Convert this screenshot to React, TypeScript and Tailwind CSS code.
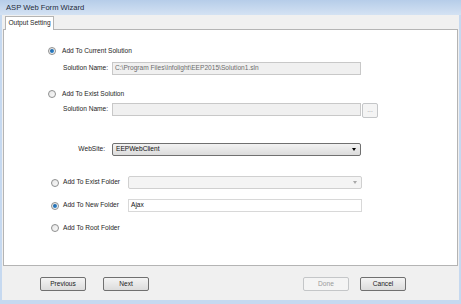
function Radio({ checked }: { checked?: boolean }) {
  return (
    <span className="flex h-[8px] w-[8px] shrink-0 items-center justify-center rounded-full border border-[#8e8f8f] bg-gradient-to-br from-[#e6e6e6] to-[#fafafa]">
      {checked && <span className="h-[4px] w-[4px] rounded-full bg-gradient-to-br from-[#1c5f9c] to-[#2f8ad6]" />}
    </span>
  );
}

function Button({ label, disabled }: { label: string; disabled?: boolean }) {
  return (
    <button
      className={
        disabled
          ? 'h-[14px] w-[46px] rounded-[2px] border border-[#c4c6c8] bg-[#f4f4f4] text-[#9a9a9a]'
          : 'h-[14px] w-[46px] rounded-[2px] border border-[#707070] bg-gradient-to-b from-[#f4f4f4] to-[#dcdcdc] text-[#1a1a1a]'
      }
    >
      {label}
    </button>
  );
}

export default function App() {
  return (
    <div
      className="flex h-[304px] w-[461px] flex-col bg-[#c6d9f0] text-[6.6px] leading-none text-[#1e1e1e]"
      style={{ fontFamily: '"Liberation Sans", Arial, sans-serif' }}
    >
      <div className="flex h-[15px] shrink-0 items-center bg-gradient-to-b from-[#b6cde9] to-[#d4e2f3] pl-[6px] text-[7.6px] text-[#1e2a3a]">
        ASP Web Form Wizard
      </div>

      <div className="mx-[2px] flex flex-1 flex-col bg-[#f0f0f0]">
        <div className="flex h-[14px] shrink-0 items-end pl-[3px]">
          <div className="relative z-10 -mb-px flex h-[14px] w-[49px] items-center justify-center border border-b-0 border-[#b4b4b4] bg-white">
            Output Setting
          </div>
        </div>

        <div className="mx-px flex h-[237px] shrink-0 flex-col border border-[#b4b4b4] bg-white">
          <div className="mt-[14px] flex h-[14px] items-center pl-[44px]">
            <Radio checked />
            <span className="ml-[6px]">Add To Current Solution</span>
          </div>
          <div className="mt-[4px] flex h-[13px] items-center pl-[59px]">
            <span className="w-[49px]">Solution Name:</span>
            <div className="flex h-[13px] w-[249px] items-center border border-[#c8c8c8] bg-[#f0f0f0] pl-[2px] text-[#6d6d6d]">
              C:\Program Files\Infolight\EEP2015\Solution1.sln
            </div>
          </div>

          <div className="mt-[12px] flex h-[14px] items-center pl-[44px]">
            <Radio />
            <span className="ml-[6px]">Add To Exist Solution</span>
          </div>
          <div className="mt-[2px] flex h-[15px] items-start pl-[59px]">
            <span className="flex h-[13px] w-[49px] items-center">Solution Name:</span>
            <div className="h-[13px] w-[249px] border border-[#c8c8c8] bg-[#f0f0f0]" />
            <div className="ml-px flex h-[15px] w-[16px] items-center justify-center rounded-[2px] border border-[#c4c6c8] bg-[#f4f4f4] text-[#9a9a9a]">
              ...
            </div>
          </div>

          <div className="mt-[25px] flex h-[13px] items-center">
            <span className="w-[108px] pr-[7px] text-right">WebSite:</span>
            <div className="flex h-[13px] w-[249px] items-center justify-between rounded-[2px] border border-[#707070] bg-gradient-to-b from-[#f2f2f2] to-[#dcdcdc] pl-[3px] pr-[4px] text-[#111]">
              <span>EEPWebClient</span>
              <span className="h-0 w-0 border-x-[2.5px] border-t-[3px] border-x-transparent border-t-black" />
            </div>
          </div>

          <div className="mt-[20px] flex h-[13px] items-center pl-[47px]">
            <Radio />
            <span className="ml-[4px] w-[65px]">Add To Exist Folder</span>
            <div className="flex h-[13px] w-[234px] items-center justify-end rounded-[2px] border border-[#d0d0d0] bg-[#f4f4f4] pr-[4px]">
              <span className="h-0 w-0 border-x-[2.5px] border-t-[3px] border-x-transparent border-t-[#a8a8a8]" />
            </div>
          </div>
          <div className="mt-[10px] flex h-[13px] items-center pl-[47px]">
            <Radio checked />
            <span className="ml-[4px] w-[65px]">Add To New Folder</span>
            <div className="flex h-[13px] w-[234px] items-center border border-[#d8d8d8] bg-white pl-[2px] text-[#111]">
              Ajax
            </div>
          </div>
          <div className="mt-[9px] flex h-[14px] items-center pl-[47px]">
            <Radio />
            <span className="ml-[4px]">Add To Root Folder</span>
          </div>
        </div>

        <div className="flex flex-1 items-start pt-[11px]">
          <div className="ml-[38px]"><Button label="Previous" /></div>
          <div className="ml-[17px]"><Button label="Next" /></div>
          <div className="ml-[154px]"><Button label="Done" disabled /></div>
          <div className="ml-[11px]"><Button label="Cancel" /></div>
        </div>
      </div>
      <div className="h-[4px] shrink-0" />
    </div>
  );
}
